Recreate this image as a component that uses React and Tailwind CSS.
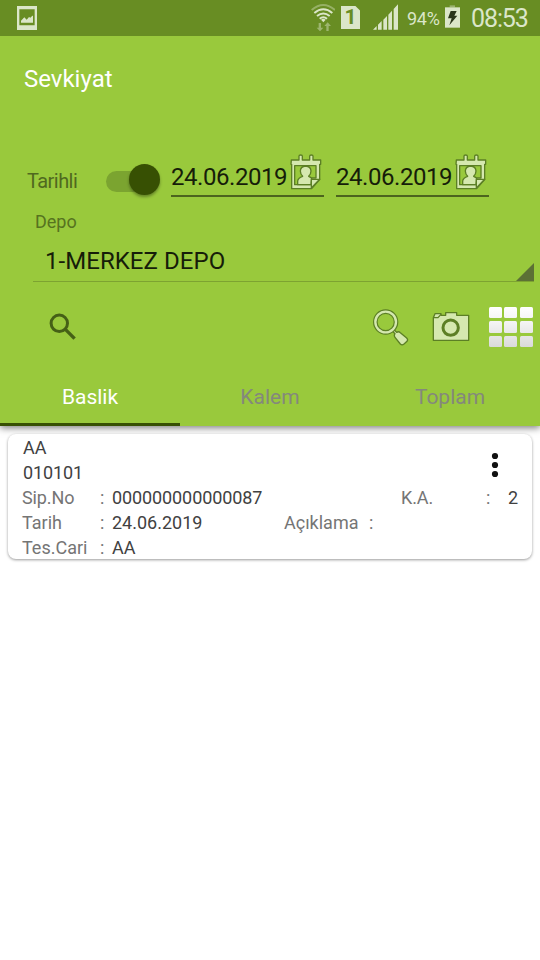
import { useState } from "react";

const tabs = ["Baslik", "Kalem", "Toplam"];

const WifiIcon = () => (
  <svg width="24" height="28" viewBox="0 0 72 84" fill="none" className="mb-0.5 ml-[311px]">
    <g stroke="#dbe6c9" strokeWidth="6">
      <path d="M2 21Q37 -9 72 21" opacity=".4" />
      <path d="M10 30Q37 8 64 30" />
      <path d="M18 39Q37 24 56 39" />
      <path d="M26 47Q37 38 48 47" />
    </g>
    <path d="M30 50Q37 45 44 50L37 58z" fill="#dbe6c9" />
    <g fill="#dbe6c9" opacity=".45">
      <path d="M23 60h7v14h7L27 85 17 74h6z" />
      <path d="M46 84h7V69h7L50 58 40 69h6z" />
    </g>
  </svg>
);

const BatteryIcon = () => (
  <svg width="15" height="23" viewBox="0 0 45 69" className="mb-[3px] ml-[5px]">
    <path d="M14 1h16v6H14z" fill="#9bb36f" />
    <path d="M0 7h45v61H0z" fill="#dbe6c9" />
    <path d="M17 18h18l-7 14h9L13 61l7-21H9z" fill="#29351a" />
  </svg>
);

const CalendarIcon = () => (
  <svg width="32" height="36" viewBox="0 0 96 108" stroke="#5c7f25" strokeWidth="4" strokeLinejoin="round">
    <path d="M4 18h23V6q0-3 5-3t5 3v12h22V6q0-3 5-3t5 3v12h23v13h-3v46l-24 27H5V31H3z" fill="#d5e8af" />
    <path d="M14 35h64v37H63v20H14z" fill="#99c93c" />
    <path d="M23 92V81q1-9 15-14-7-7-7-16 1-14 16-15 15 1 16 15 0 9-7 16 7 3 9 6l-2 19z" fill="#d5e8af" />
    <path d="M89 76H64v26z" fill="#d5e8af" />
  </svg>
);

const LensIcon = () => (
  <svg width="38" height="38" viewBox="0 0 114 114" fill="none" className="ml-[295px]">
    <path d="M61 69l8 8q-4 6 0 11l16 20q5 5 11 0l9-8q4-5-1-10L85 74q-5-5-11-1l-8-8z" fill="#d5e8af" stroke="#5c7f25" strokeWidth="4" strokeLinejoin="round" />
    <circle cx="41" cy="42" r="31" stroke="#5c7f25" strokeWidth="14" />
    <circle cx="41" cy="42" r="31" stroke="#d5e8af" strokeWidth="7" />
  </svg>
);

const CameraIcon = () => (
  <svg width="38" height="32" viewBox="0 0 114 96" stroke="#5c7f25" strokeWidth="4" strokeLinejoin="round" className="ml-[22px]">
    <path d="M4 20L9 8h18v5h14V5h33v8h36v75H4z" fill="#d5e8af" />
    <path d="M4 20h14l9-10" fill="none" />
    <circle cx="56" cy="50" r="23" fill="#d5e8af" strokeWidth="9" />
  </svg>
);

const Field = ({ label, value, labelClass, valueClass = "" }) => (
  <>
    <span className={`${labelClass} text-[#757575]`}>{label}</span>
    <span className="w-3 text-[#757575]">:</span>
    <span className={valueClass}>{value}</span>
  </>
);

const DateInput = ({ value }) => (
  <div className="flex h-[43px] w-[153px] items-start border-b-2 border-[#4c641e]">
    <span className="mt-1.5 w-[119px] text-[24px] leading-[34px] tracking-[-0.45px] whitespace-nowrap text-[#161d09]">
      {value}
    </span>
    <CalendarIcon />
  </div>
);

const StatusBar = () => (
  <div className="relative z-10 flex h-9 items-center bg-[#688d23] text-[#dbe6c9]">
    <svg width="20" height="24" viewBox="0 0 60 72" className="ml-[17px] shrink-0">
      <path d="M0 0h60v72H0zM7 10v48h46V10z" fill="#dbe6c9" fillRule="evenodd" />
      <path d="M12 50v-6l10-10 7 7 7-8 4 2 6-6h2v21z" fill="#dbe6c9" />
    </svg>
    <div className="flex flex-1 items-center -ml-[37px]">
      <WifiIcon />
      <div className="mb-px ml-1.5 flex h-[23px] w-[19px] items-center justify-center bg-[#dbe6c9] text-[21px] font-bold text-[#688d23] [clip-path:polygon(0_0,76%_0,100%_20%,100%_100%,0_100%)]">
        1
      </div>
      <svg width="25" height="26" viewBox="0 0 75 78" fill="#dbe6c9" className="mb-0.5 ml-[13px]">
        <path d="M0 77l11-11v11zM15 62l11-11v26H15zM31 47l11-11v41H31zM46 32l11-12v57H46zM62 15L75 1v76H62z" />
      </svg>
      <span className="ml-[9px] w-[33px] text-[18px] tracking-[-0.3px] whitespace-nowrap">94%</span>
      <BatteryIcon />
      <span className="mt-0.5 ml-[11px] text-[25px] tracking-[-1.1px] whitespace-nowrap">08:53</span>
    </div>
  </div>
);

const App = () => {
  const [active, setActive] = useState("Baslik");
  const [dated, setDated] = useState(true);

  return (
    <div className="flex h-[960px] w-[540px] flex-col overflow-hidden bg-white font-[Roboto,sans-serif]">
      <StatusBar />

      <header className="flex h-[390px] shrink-0 flex-col bg-[#99c93c] shadow-[0_2px_7px_rgba(0,0,0,0.5)]">
        <h1 className="h-[118px] pt-[25px] pl-6 text-[24px] leading-9 text-white">Sevkiyat</h1>

        <div className="flex h-[43px]">
          <span className="w-[79px] pt-[15px] pl-[27px] text-[20px] leading-6 tracking-[-0.55px] whitespace-nowrap text-[#50691f]">
            Tarihli
          </span>
          <button
            onClick={() => setDated(!dated)}
            className="mt-[17px] ml-[27px] flex h-[21px] w-[54px] items-center rounded-full bg-[linear-gradient(to_right,#7ba430_44px,transparent_44px)]"
          >
            <span className={`mb-1 size-[31px] shrink-0 rounded-full bg-[#375003] shadow-[0_2px_3px_rgba(0,0,0,0.35)] ${dated ? "ml-[23px]" : "ml-0"}`} />
          </button>
          <div className="ml-[11px] flex gap-3">
            <DateInput value="24.06.2019" />
            <DateInput value="24.06.2019" />
          </div>
        </div>

        <label className="mt-[13px] pl-[35px] text-[18px] leading-6 text-[#56731f]">Depo</label>
        <div className="mt-[5px] mr-1.5 ml-[33px] flex h-[43px] items-end justify-between border-b border-[#7da331] pl-3">
          <span className="pb-0.5 text-[24px] leading-9 tracking-[0.05px] text-[#161d09]">1-MERKEZ DEPO</span>
          <svg width="18" height="18" viewBox="0 0 18 18">
            <path d="M18 0v18H0z" fill="#5c7035" />
          </svg>
        </div>

        <div className="flex h-[90px] items-center">
          <svg width="28" height="28" viewBox="0 0 28 28" fill="none" stroke="#456016" className="ml-[49px]">
            <circle cx="10.3" cy="10.3" r="8.2" strokeWidth="3" />
            <path d="M16.4 16.4l9.2 9.2" strokeWidth="3.4" />
          </svg>
          <LensIcon />
          <CameraIcon />
          <div className="ml-[18.7px] grid grid-cols-[13px_13px_13px] grid-rows-3 gap-x-[2.8px] gap-y-[3px]">
            {[0, 1, 2, 3, 4, 5, 6, 7, 8].map((i) => (
              <span
                key={i}
                className={`h-[11.5px] rounded-[1.5px] bg-linear-to-b ${
                  i < 3 ? "from-white to-[#f6f6f6]" : i < 6 ? "from-[#f5f5f5] to-[#e8e8e8]" : "from-[#e6e6e6] to-[#dadada]"
                }`}
              />
            ))}
          </div>
        </div>

        <nav className="grid flex-1 grid-cols-3">
          {tabs.map((tab) => (
            <button
              key={tab}
              onClick={() => setActive(tab)}
              className={`border-b-3 text-[21px] ${
                active === tab ? "border-[#375003] text-white" : "border-transparent text-[#84887c]"
              }`}
            >
              {tab}
            </button>
          ))}
        </nav>
      </header>

      <main className="mx-2 mt-2 flex h-[125px] rounded-lg bg-white text-[18px] leading-[25px] text-[#414141] shadow-[0_1px_3px_rgba(0,0,0,0.4)]">
        <div className="flex flex-1 flex-col pt-px pl-[15px]">
          <div className="flex h-[50px] justify-between">
            <div>
              <p>AA</p>
              <p className="tracking-[-0.1px]">010101</p>
            </div>
            <svg width="8" height="26" viewBox="0 0 8 26" className="mt-[17px] mr-[33px]" fill="#111">
              <circle cx="4" cy="4" r="3.1" />
              <circle cx="4" cy="13" r="3.1" />
              <circle cx="4" cy="22" r="3.1" />
            </svg>
          </div>
          <div className="-ml-px flex tracking-[-0.1px]">
            <Field label="Sip.No" value="000000000000087" labelClass="w-[78px]" valueClass="w-[289px]" />
            <Field label="K.A." value="2" labelClass="w-[85px]" valueClass="pl-2.5" />
          </div>
          <div className="-ml-px flex">
            <Field label="Tarih" value="24.06.2019" labelClass="w-[78px]" valueClass="w-[172px]" />
            <Field label="Açıklama" value="" labelClass="w-[85px]" />
          </div>
          <div className="-ml-px flex">
            <Field label="Tes.Cari" value="AA" labelClass="w-[78px]" />
          </div>
        </div>
      </main>
    </div>
  );
};

export default App;
